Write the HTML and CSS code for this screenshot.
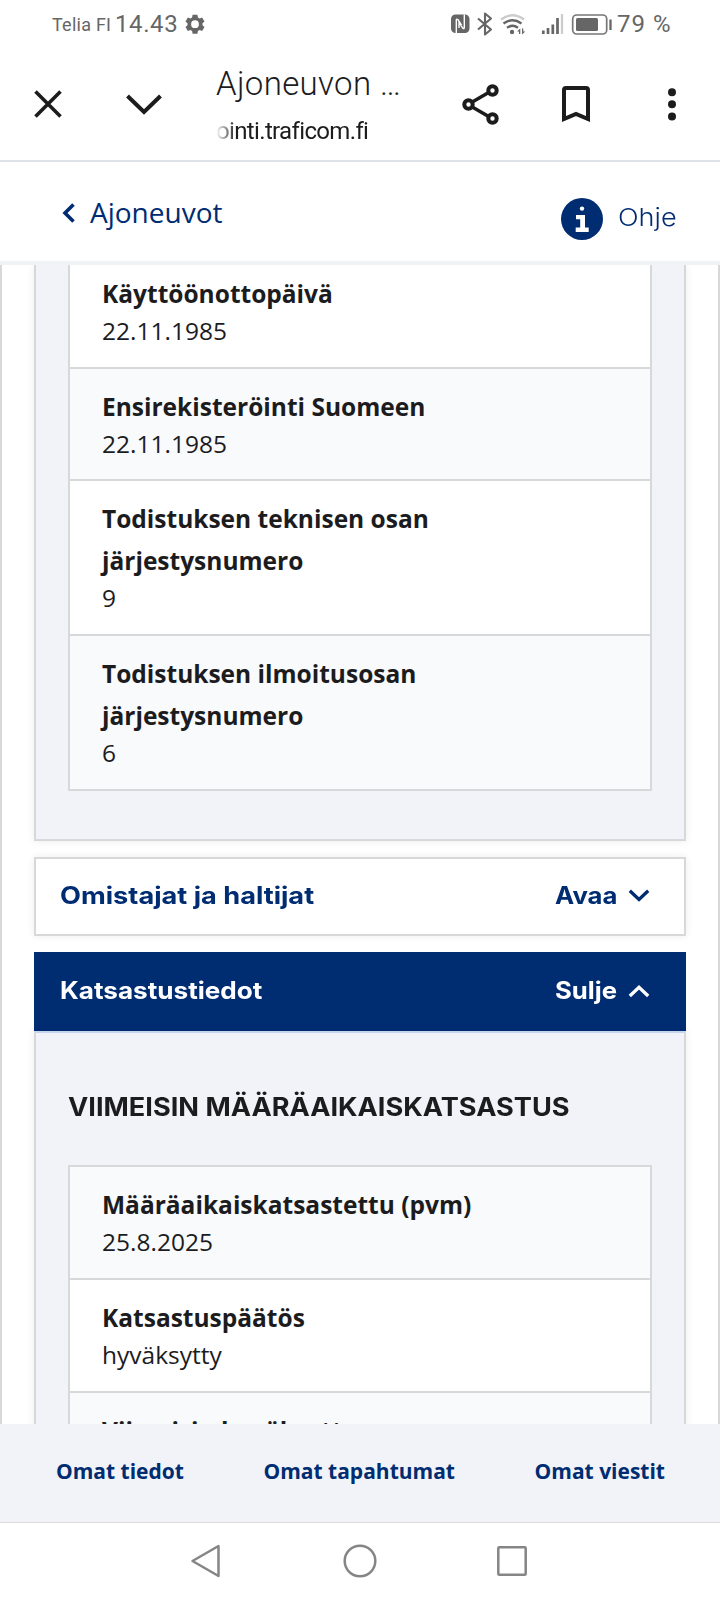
FILE: index.html
```
<!DOCTYPE html>
<html lang="fi">
<head>
<meta charset="utf-8">
<title>Ajoneuvon tiedot</title>
<link rel="stylesheet" href="styles.css">
</head>
<body>
<div class="status">
  <span class="carrier">Telia FI</span>
  <span class="clock">14.43</span>
  <svg class="gear" width="20" height="20" viewBox="0 0 20 20"><path fill="#666" fill-rule="evenodd" d="M7.6 .8h4.8l.5 2.6 1.7 1 2.5-.9 2.4 4.1-2 1.7v1.9l2 1.7-2.4 4.1-2.5-.9-1.7 1-.5 2.6H7.600l-.5-2.600-1.700-1-2.500.9-2.400-4.100 2-1.700V9.300l-2-1.700 2.400-4.100 2.500.9 1.700-1zM10 6.300a3.900 3.900 0 1 0 0 7.800a3.900 3.900 0 1 0 0-7.800z"/></svg>
  <svg class="indicators" width="164" height="26" viewBox="450 11 164 26" fill="none" stroke="#666">
    <rect x="451" y="14.500" width="18.500" height="18.500" rx="4.500" fill="#666" stroke="none"/>
    <path d="M456.300 33V20.200q0-1.800 1.600-.6l3.600 5.500M464.300 14.500V27.500q0 1.800-1.500.6l-3.800-5.600v5.500" stroke="#fff" stroke-width="1.400"/>
    <path d="M478 18.500l13 11-6 5V13.500l6 5-13 11" stroke-width="2.100" stroke-linejoin="round"/>
    <path d="M501 19.500q11.500-8.500 23 0" stroke="#ccc" stroke-width="2.300"/>
    <path d="M503.500 23.500q9-6.500 18 0M507 27.800q5.500-4 11 0" stroke-width="2.300"/>
    <circle cx="512" cy="32" r="2.200" fill="#666" stroke="none"/>
    <path d="M517 31.500l3.300-3v5.500h-1.300v-2.500zM525.300 31.500l-3.300 3V28.500h1.300v3z" fill="#666" stroke="none"/>
    <path d="M543.300 30.500V34M548 28v6M552.800 24.500V34M557.500 18v16" stroke-width="2.700"/>
    <path d="M562 14v20" stroke="#ccc" stroke-width="2.300"/>
    <rect x="572.700" y="15" width="34" height="19" rx="4" stroke="#777" stroke-width="1.700"/>
    <rect x="576" y="18" width="22" height="13" rx="1.500" fill="#666" stroke="none"/>
    <path d="M610.500 19.500V30" stroke-width="2.300"/>
  </svg>
  <span class="percent">79 %</span>
</div>

<div class="toolbar">
  <svg class="close" width="28" height="28" viewBox="0 0 28 28"><path d="M1.500 1.500l25 25M26.500 1.500l-25 25" stroke="#1c1c1c" stroke-width="3.600" fill="none"/></svg>
  <svg class="down" width="36" height="21" viewBox="0 0 36 21"><path d="M1.500 2L18 18 34.500 2" stroke="#1c1c1c" stroke-width="4" fill="none"/></svg>
  <div class="page-name">
    <div class="page-title">Ajoneuvon …</div>
    <div class="page-url">ointi.traficom.fi</div>
  </div>
  <svg class="share" width="37" height="41" viewBox="0 0 37 41" fill="#fff" stroke="#1c1c1c" stroke-width="4"><path d="M6 20.500L30.500 6.200M6 20.500l24.500 14.300" stroke-width="3.500"/><circle cx="6.500" cy="20.500" r="4.200"/><circle cx="30.500" cy="6.500" r="4.200"/><circle cx="30.500" cy="34.500" r="4.200"/></svg>
  <svg class="bookmark" width="28" height="37" viewBox="0 0 28 37"><path d="M2 33V4q0-2 2-2h20q2 0 2 2v29l-12-5z" fill="none" stroke="#1c1c1c" stroke-width="4"/></svg>
  <svg class="more" width="8" height="33" viewBox="0 0 8 33" fill="#1c1c1c"><circle cx="4" cy="4.200" r="4"/><circle cx="4" cy="16.300" r="4"/><circle cx="4" cy="28.400" r="4"/></svg>
</div>

<div class="site-header">
  <a class="back"><svg width="14" height="20" viewBox="0 0 14 20"><path d="M11.500 1.500L3 10l8.500 8.500" fill="none" stroke="#002c72" stroke-width="3.600"/></svg><span>Ajoneuvot</span></a>
  <a class="help"><svg width="42" height="42" viewBox="0 0 42 42"><circle cx="21" cy="21" r="21" fill="#002c72"/><circle cx="21" cy="10.600" r="2.200" fill="#fff"/><path d="M15 17h9v12.500h3.700V34H14.700v-4.500h4.500v-8.300H15z" fill="#fff"/></svg><span>Ohje</span></a>
</div>

<main class="content">
  <section class="panel first">
    <dl class="table">
      <div class="row row-start"><dt>Käyttöönottopäivä</dt><dd>22.11.1985</dd></div>
      <div class="row tint"><dt>Ensirekisteröinti Suomeen</dt><dd>22.11.1985</dd></div>
      <div class="row tall"><dt>Todistuksen teknisen osan järjestysnumero</dt><dd>9</dd></div>
      <div class="row tall tint"><dt>Todistuksen ilmoitusosan järjestysnumero</dt><dd>6</dd></div>
    </dl>
  </section>
  <div class="accordion closed">
    <span class="name owners">Omistajat ja haltijat</span><span class="action open-label">Avaa</span>
    <svg width="22" height="14" viewBox="0 0 22 14"><path d="M1.800 1.800L11 10.500l9.200-8.700" fill="none" stroke="#002c72" stroke-width="3.300"/></svg>
  </div>
  <div class="accordion open">
    <span class="name inspect">Katsastustiedot</span><span class="action close-label">Sulje</span>
    <svg width="22" height="14" viewBox="0 0 22 14"><path d="M1.800 12L11 3.300 20.200 12" fill="none" stroke="#fff" stroke-width="3.300"/></svg>
  </div>
  <section class="panel second">
    <h2>VIIMEISIN MÄÄRÄAIKAISKATSASTUS</h2>
    <dl class="table">
      <div class="row mid tint"><dt>Määräaikaiskatsastettu (pvm)</dt><dd>25.8.2025</dd></div>
      <div class="row mid"><dt>Katsastuspäätös</dt><dd>hyväksytty</dd></div>
      <div class="row mid tint"><dt>Viimeisin hyväksytty</dt><dd></dd></div>
    </dl>
  </section>
</main>

<nav class="tabs"><a class="t1">Omat tiedot</a><a class="t2">Omat tapahtumat</a><a class="t3">Omat viestit</a></nav>

<div class="system">
  <svg width="338" height="34" viewBox="190 1544 338 34" fill="none" stroke="#858585" stroke-width="2.500" stroke-linejoin="round"><path d="M218.500 1546v30l-26-15z"/><circle cx="360" cy="1561" r="15.300"/><rect x="498.300" y="1547.300" width="27.400" height="27.400" rx="1"/></svg>
</div>
</body>
</html>
```
FILE: styles.css
```
* { box-sizing: border-box; }
body {
  margin: 0;
  width: 720px;
  height: 1600px;
  overflow: hidden;
  display: flex;
  flex-direction: column;
  background: #fff;
  color: #1c1c1e;
  font-family: "Open Sans", sans-serif;
}
svg { display: block; flex: none; }
span, a, dt { white-space: nowrap; }

.status {
  height: 48px;
  flex: none;
  display: flex;
  align-items: center;
  color: #666;
  font-family: Roboto, sans-serif;
}
.carrier { width: 63px; margin-left: 52px; font-size: 18px; letter-spacing: 0.25px; }
.clock { width: 70px; font-size: 24px; letter-spacing: 0.6px; }
.indicators { margin-left: 245px; }
.percent { margin-left: 3px; font-size: 24px; letter-spacing: 1px; }

.toolbar {
  height: 114px;
  flex: none;
  display: flex;
  align-items: center;
  padding: 0 0 0 34px;
  border-bottom: 2px solid #dee3ea;
  font-family: Roboto, sans-serif;
}
.down { margin-left: 64px; }
.page-name { width: 186px; margin-left: 54px; padding-top: 8px; overflow: hidden; white-space: nowrap; }
.page-title { font-size: 33px; line-height: 47px; font-weight: 350; letter-spacing: 0.35px; }
.page-url {
  font-size: 24px;
  line-height: 49px;
  letter-spacing: -0.65px;
  -webkit-mask-image: linear-gradient(90deg, transparent, #000 20px);
  mask-image: linear-gradient(90deg, transparent, #000 20px);
}
.share { margin-left: 60px; }
.bookmark { margin-left: 63px; }
.more { margin-left: 78px; }

.site-header {
  height: 103px;
  flex: none;
  display: flex;
  justify-content: space-between;
  padding: 31px 44px 0 62px;
  color: #002c72;
  border-bottom: 4px solid #f1f2f6;
}
.back { display: flex; align-items: center; height: 40px; font-size: 28px; gap: 14px; }
.back span { margin-top: -2px; }
.help { display: flex; align-items: center; height: 52px; gap: 15px; font: 300 24px Inter, sans-serif; }
.help span { width: 58px; margin-top: -3px; transform: scaleX(1.13); transform-origin: left; }

.content {
  height: 1159px;
  flex: none;
  overflow: hidden;
  padding: 0 32px;
  border: solid #d6d8da;
  border-width: 0 2px;
}
.panel {
  background: #f1f3f8;
  border: 2px solid #d6d8da;
  padding: 0 32px;
  box-shadow: 0 0 8px rgba(0, 0, 0, 0.08);
}
.first { height: 576px; border-top: 0; }
.table { margin: 0; border: 2px solid #d6d8da; background: #fff; }
.first .table { border-top: 0; }
.row { height: 112px; padding: 17px 32px 0; border-bottom: 2px solid #d6d8da; }
.row:last-child { border-bottom: 0; }
.row-start { height: 104px; padding-top: 8px; }
.tall { height: 155px; }
.tall:last-child { height: 153px; }
.mid { height: 113px; padding-top: 17px; }
.tint { background: #f8fafc; }
dt { font-size: 24.500px; line-height: 42px; font-weight: 700; }
.tall dt { white-space: normal; width: 360px; }
dd { margin: 0; font-size: 24.500px; line-height: 32px; }

.accordion {
  display: flex;
  align-items: center;
  height: 79px;
  margin-top: 16px;
  padding: 0 36px 2px 26px;
  font: 700 24px Inter, sans-serif;
  color: #002c72;
}
.closed { border: 2px solid #d6d8da; padding: 0 34px 2px 24px; box-shadow: 0 0 8px rgba(0, 0, 0, 0.08); }
.open { background: #002c72; color: #fff; }
.name, .action, h2 { transform-origin: left; }
.name { margin-right: auto; }
.owners { transform: scaleX(1.132); }
.inspect { transform: scaleX(1.088); }
.action { width: 73px; transform: scaleX(1.07); }
.second { border-top-color: #c8d5ee; height: 500px; }
h2 { width: 462px; margin: 55px 0 39px; font: 700 25px/38px Inter, sans-serif; transform: scaleX(1.086); white-space: nowrap; }

.tabs {
  height: 99px;
  flex: none;
  display: flex;
  justify-content: space-between;
  padding: 32px 55px 0 56px;
  background: #f1f3f8;
  border-bottom: 1px solid #dcdcdc;
  color: #002c72;
  font-size: 21px;
  line-height: 30px;
  font-weight: 700;
}
.system { flex: 1; display: flex; justify-content: center; align-items: center; padding: 0 2px 2px 0; }
```
